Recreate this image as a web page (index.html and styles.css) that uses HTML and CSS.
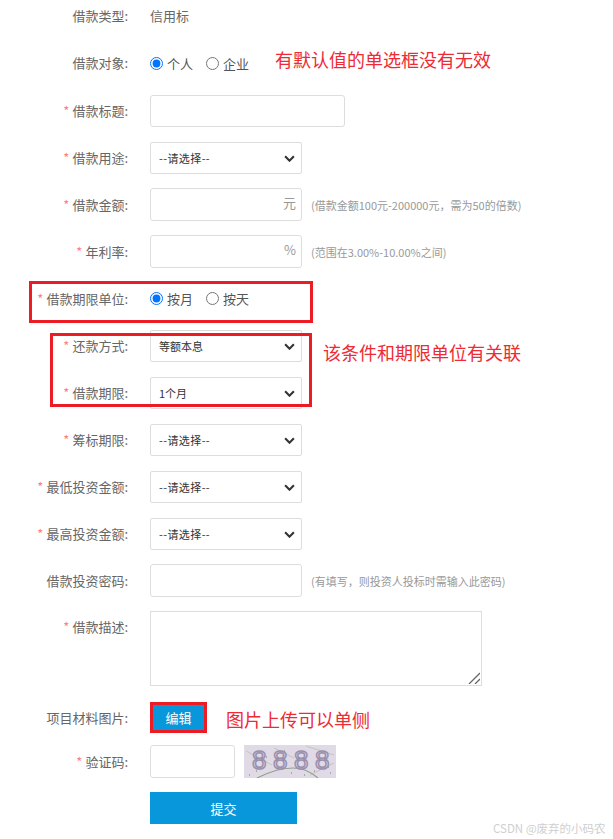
FILE: index.html
```html
<!DOCTYPE html>
<html lang="zh-CN">
<head>
  <meta charset="UTF-8" />
  <title>借款信息</title>
  <link rel="stylesheet" href="styles.css">
</head>
<body>

  <form class="form">
    <div class="row row-plain">
      <label class="label">借款类型:</label>
      <span class="value">信用标</span>
    </div>

    <div class="row row-plain">
      <label class="label">借款对象:</label>
      <div class="radios">
        <label class="radio"><input type="radio" name="target" checked>个人</label>
        <label class="radio"><input type="radio" name="target">企业</label>
      </div>
    </div>

    <div class="row">
      <label class="label"><i>*</i>借款标题:</label>
      <input class="input input-title" type="text">
    </div>

    <div class="row">
      <label class="label"><i>*</i>借款用途:</label>
      <div class="select select-empty"><select><option>--请选择--</option></select><svg viewBox="0 0 12 8"><path d="M1 1.5l5 5 5-5"/></svg></div>
    </div>

    <div class="row">
      <label class="label"><i>*</i>借款金额:</label>
      <div class="input-group"><input type="text"><span>元</span></div>
      <span class="hint">(借款金额100元-200000元，需为50的倍数)</span>
    </div>

    <div class="row">
      <label class="label"><i>*</i>年利率:</label>
      <div class="input-group"><input type="text"><span>%</span></div>
      <span class="hint">(范围在3.00%-10.00%之间)</span>
    </div>

    <div class="row">
      <label class="label"><i>*</i>借款期限单位:</label>
      <div class="radios">
        <label class="radio"><input type="radio" name="unit" checked>按月</label>
        <label class="radio"><input type="radio" name="unit">按天</label>
      </div>
    </div>

    <div class="row">
      <label class="label"><i>*</i>还款方式:</label>
      <div class="select"><select><option>等额本息</option></select><svg viewBox="0 0 12 8"><path d="M1 1.5l5 5 5-5"/></svg></div>
    </div>

    <div class="row">
      <label class="label"><i>*</i>借款期限:</label>
      <div class="select"><select><option>1个月</option></select><svg viewBox="0 0 12 8"><path d="M1 1.5l5 5 5-5"/></svg></div>
    </div>

    <div class="row">
      <label class="label"><i>*</i>筹标期限:</label>
      <div class="select select-empty"><select><option>--请选择--</option></select><svg viewBox="0 0 12 8"><path d="M1 1.5l5 5 5-5"/></svg></div>
    </div>

    <div class="row">
      <label class="label"><i>*</i>最低投资金额:</label>
      <div class="select select-empty"><select><option>--请选择--</option></select><svg viewBox="0 0 12 8"><path d="M1 1.5l5 5 5-5"/></svg></div>
    </div>

    <div class="row">
      <label class="label"><i>*</i>最高投资金额:</label>
      <div class="select select-empty"><select><option>--请选择--</option></select><svg viewBox="0 0 12 8"><path d="M1 1.5l5 5 5-5"/></svg></div>
    </div>

    <div class="row">
      <label class="label">借款投资密码:</label>
      <input class="input input-pwd" type="text">
      <span class="hint">(有填写，则投资人投标时需输入此密码)</span>
    </div>

    <div class="row row-top">
      <label class="label"><i>*</i>借款描述:</label>
      <div class="textarea-box">
        <textarea class="textarea"></textarea>
        <svg class="grip" viewBox="0 0 12 12"><path d="M1 12L12 1M7 12l5-5"/></svg>
      </div>
    </div>

    <div class="row row-edit">
      <label class="label">项目材料图片:</label>
      <button class="edit-btn" type="button">编辑</button>
    </div>

    <div class="row row-code">
      <label class="label"><i>*</i>验证码:</label>
      <input class="input input-code" type="text">
      <svg class="captcha" viewBox="0 0 92 33">
        <rect width="92" height="33" fill="#dfdae6"/>
        <path d="M2 6l26 14M62 1l28 9M66 30l24-12M30 3l20 10" fill="none" stroke="#c9c3bb" stroke-width="1"/>
        <path d="M13 33c14-7 26-10 36-10s18 4 25 10" fill="none" stroke="#8f9c84" stroke-width="1.2"/>
        <path d="M5 30h1M22 12h1M47 28h1M70 26h1M84 22h1M86 28h1M40 6h1M60 30h1M12 26h1" stroke="#6f7a66" stroke-width="1"/>
        <text x="8" y="24" class="captcha-text">8888</text>
      </svg>
    </div>

    <div class="row row-submit">
      <button class="submit-btn" type="button">提交</button>
    </div>
  </form>

  <div class="mark mark-unit"></div>
  <div class="mark mark-linked"></div>
  <div class="note note-default">有默认值的单选框没有无效</div>
  <div class="note note-linked">该条件和期限单位有关联</div>
  <div class="note note-upload">图片上传可以单侧</div>
  <div class="watermark">CSDN @废弃的小码农</div>

</body>
</html>
```

FILE: styles.css
```css
body {
  margin: 0;
  position: relative;
  height: 839px;
  overflow: hidden;
  background: #fff;
  font-family: "Noto Sans CJK SC", "Liberation Sans", sans-serif;
  font-size: 13px;
  color: #666;
}
.form {
  display: flex;
  flex-direction: column;
  gap: 14px;
}
.row {
  display: flex;
  align-items: center;
  min-height: 33px;
}
.row-plain .label,
.row-plain .value {
  padding-bottom: 2px;
}
.row-top {
  align-items: flex-start;
}
.row-top .label {
  margin-top: 6px;
}
.row-edit {
  margin-top: 2px;
  min-height: 31px;
}
.row-code {
  margin-top: -2px;
}
.row-submit {
  align-items: flex-start;
  padding-left: 150px;
}
.label {
  width: 128px;
  margin-right: 22px;
  text-align: right;
  white-space: nowrap;
}
.label i {
  font-style: normal;
  color: #ff8080;
  margin-right: 3px;
}
.value {
  color: #666;
}
.radios {
  display: flex;
  gap: 13px;
}
.radio {
  display: flex;
  align-items: center;
  color: #555;
}
.radio input {
  width: 13px;
  height: 13px;
  margin: 0 4px 0 0;
}
.input {
  box-sizing: border-box;
  height: 33px;
  border: 1px solid #ddd;
  border-radius: 3px;
  padding: 0 8px;
  outline: none;
}
.input-title {
  width: 195px;
  height: 32px;
  margin-top: 1px;
}
.input-pwd {
  width: 152px;
}
.input-code {
  width: 85px;
}
.input-group {
  box-sizing: border-box;
  display: flex;
  align-items: center;
  width: 152px;
  height: 33px;
  border: 1px solid #ddd;
  border-radius: 3px;
  padding-right: 5px;
  color: #999;
  font-size: 13px;
}
.input-group input {
  flex: 1;
  min-width: 0;
  border: none;
  outline: none;
  background: none;
}
.input-group span {
  padding-bottom: 4px;
}
.select {
  position: relative;
  width: 152px;
  height: 32px;
}
.select select {
  box-sizing: border-box;
  width: 100%;
  height: 100%;
  appearance: none;
  background: #fff;
  border: 1px solid #ddd;
  border-radius: 2px;
  padding: 0 8px;
  font-family: inherit;
  font-size: 11px;
  color: #333;
}
.select-empty select {
  letter-spacing: .4px;
}
.select svg {
  position: absolute;
  top: 13px;
  right: 7px;
  width: 11px;
  height: 7px;
  fill: none;
  stroke: #333;
  stroke-width: 2.4;
}
.hint {
  margin-left: 9px;
  font-size: 11px;
  color: #999;
  white-space: nowrap;
}
.textarea-box {
  position: relative;
  width: 332px;
  height: 75px;
}
.textarea {
  display: block;
  box-sizing: border-box;
  width: 100%;
  height: 100%;
  border: 1px solid #ddd;
  outline: none;
  resize: none;
}
.grip {
  position: absolute;
  right: 2px;
  bottom: 2px;
  width: 12px;
  height: 12px;
  fill: none;
  stroke: #666;
  stroke-width: 1.3;
}
.edit-btn {
  box-sizing: border-box;
  width: 57px;
  height: 31px;
  border: 3px solid #ed1c24;
  background: #0997dc;
  color: #fff;
  font-family: inherit;
  font-size: 13px;
  padding: 0;
}
.captcha {
  width: 92px;
  height: 33px;
  margin-left: 9px;
}
.captcha-text {
  font-family: "Liberation Sans", sans-serif;
  font-size: 26px;
  letter-spacing: 6.5px;
  fill: none;
  stroke: #9a8fae;
  stroke-width: 1.5;
}
.submit-btn {
  width: 147px;
  height: 32px;
  border: none;
  background: #0997dc;
  color: #fff;
  font-family: inherit;
  font-size: 13px;
}
.mark {
  position: absolute;
  box-sizing: border-box;
  border: 3px solid #ed1c24;
}
.mark-unit {
  left: 29px;
  top: 281px;
  width: 284px;
  height: 42px;
}
.mark-linked {
  left: 50px;
  top: 333px;
  width: 262px;
  height: 74px;
}
.note {
  position: absolute;
  font-size: 18px;
  line-height: 24px;
  color: #ee2a35;
  white-space: nowrap;
}
.note-default {
  left: 275px;
  top: 47px;
}
.note-linked {
  left: 323px;
  top: 340px;
}
.note-upload {
  left: 226px;
  top: 707px;
}
.watermark {
  position: absolute;
  left: 493px;
  top: 820px;
  font-size: 11.5px;
  line-height: 16px;
  color: #cfcfcf;
  white-space: nowrap;
}
```
